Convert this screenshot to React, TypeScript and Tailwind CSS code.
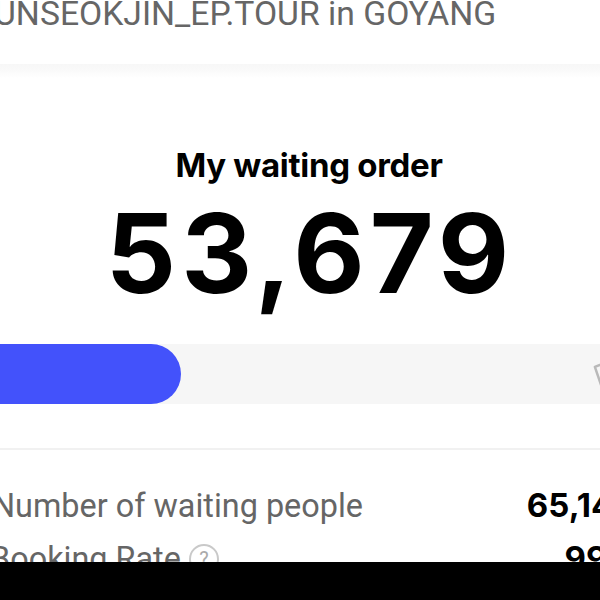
import React from "react";

function TicketIcon() {
  return (
    <svg width="34" height="34" viewBox="0 0 34 34" fill="none" className="shrink-0">
      <path d="M4 8 L26 3 L30 24 L8 29 Z" stroke="#b9b9b9" strokeWidth="2.5" strokeLinejoin="round" transform="rotate(-8 17 17)" />
    </svg>
  );
}

export default function App() {
  const progress = 181;

  return (
    <div className="w-[600px] h-[600px] overflow-hidden bg-white flex flex-col font-['Inter',sans-serif]">
      <div className="h-[562px] overflow-hidden flex flex-col">
        <div className="h-[70px] shrink-0 -ml-[6px] -mt-[6px] text-[33.7px] leading-[40px] text-[#666] whitespace-nowrap font-['Roboto',sans-serif]">
          UNSEOKJIN_EP.TOUR in GOYANG
        </div>
        <div className="h-[14px] shrink-0 bg-gradient-to-b from-[#f7f7f7] via-[#fafafa] to-white" />

        <div className="flex flex-col items-center pt-[67px]">
          <div className="text-[33px] leading-[40px] font-bold text-black tracking-[-0.3px] ml-[18px]">My waiting order</div>
          <div className="mt-[8px] text-[110px] leading-[120px] font-bold text-black tracking-[5px] ml-[20px]">53,679</div>
        </div>

        <div className="mt-[31px] h-[60px] shrink-0 bg-[#f6f6f6] flex items-center justify-between">
          <div className="h-full rounded-r-full bg-[#4352fb]" style={{ width: progress }} />
          <div className="-mr-[26px]">
            <TicketIcon />
          </div>
        </div>

        <div className="h-[44px] shrink-0" />
        <div className="h-[2px] shrink-0 bg-[#f1f1f1]" />

        <div className="flex flex-col pt-[34px]">
          <div className="flex items-center justify-between h-[44px]">
            <span className="-ml-[8px] text-[32.4px] text-[#666] whitespace-nowrap font-['Roboto',sans-serif]">Number of waiting people</span>
            <span className="-mr-[34px] text-[33px] font-bold text-black whitespace-nowrap">65,142</span>
          </div>
          <div className="flex items-center justify-between h-[44px] mt-[9px]">
            <span className="-ml-[10px] flex items-center gap-[8px] text-[32.4px] text-[#666] whitespace-nowrap font-['Roboto',sans-serif]">
              Booking Rate
              <span className="w-[30px] h-[30px] rounded-full border-2 border-[#c9c9c9] text-[20px] text-[#aaa] flex items-center justify-center">?</span>
            </span>
            <span className="-mr-[72px] text-[33px] font-bold text-black whitespace-nowrap">99.9%</span>
          </div>
        </div>
      </div>

      <div className="h-[38px] shrink-0 bg-black overflow-hidden">
        <div className="flex gap-[40px] pl-[25px] pt-[31px] text-[20px] text-white whitespace-nowrap">
          <span>ill</span>
          <span>20</span>
          <span className="ml-[80px]">t</span>
          <span>10</span>
        </div>
      </div>
    </div>
  );
}
